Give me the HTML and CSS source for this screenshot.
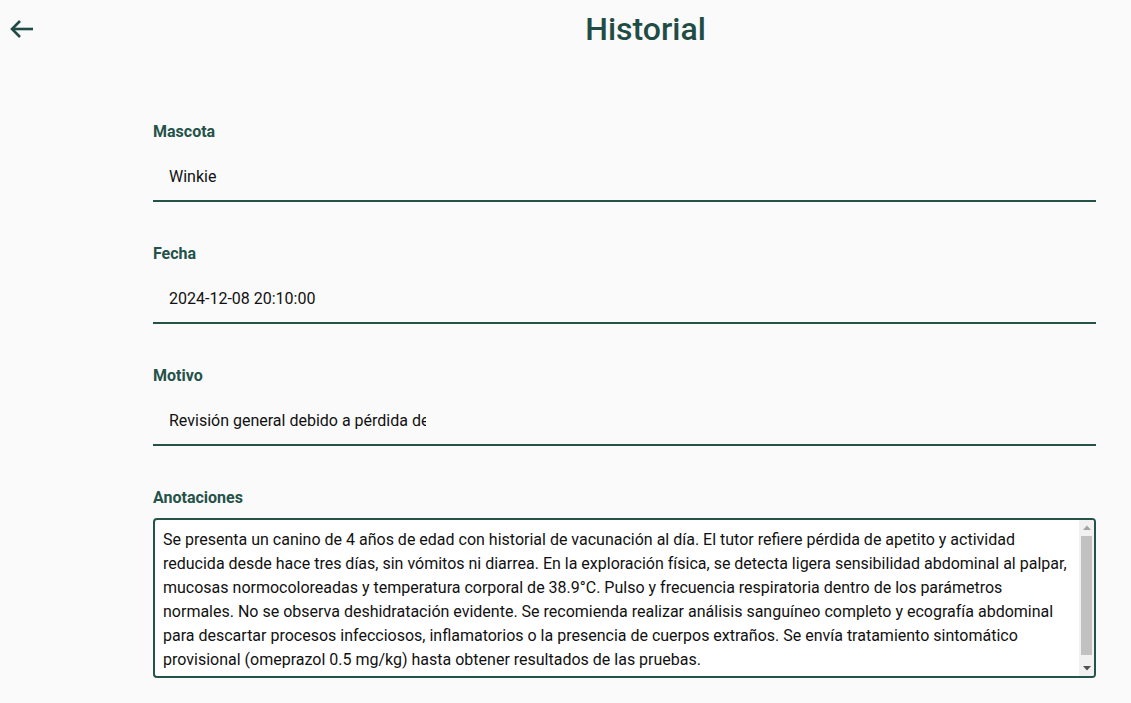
FILE: index.html
```html
<!DOCTYPE html>
<html lang="es">
<head>
<meta charset="utf-8">
<title>Historial</title>
<link rel="stylesheet" href="styles.css">
</head>
<body>
<header class="topbar">
  <div class="back-area">
    <button class="back" aria-label="Volver">
      <svg width="26" height="20" viewBox="0 0 26 20" fill="none" stroke="#1f4d45" stroke-width="2.6" stroke-linecap="butt" stroke-linejoin="miter">
        <path d="M24 10H3"/>
        <path d="M11 2L3 10l8 8"/>
      </svg>
    </button>
  </div>
  <h1 class="title">Historial</h1>
</header>
<main class="form">
  <div class="field">
    <label class="label">Mascota</label>
    <div class="line"><input class="input" type="text" value="Winkie" readonly></div>
  </div>
  <div class="field">
    <label class="label">Fecha</label>
    <div class="line"><input class="input" type="text" value="2024-12-08 20:10:00" readonly></div>
  </div>
  <div class="field">
    <label class="label">Motivo</label>
    <div class="line"><input class="input" type="text" value="Revisión general debido a pérdida de apetito y actividad reducida" readonly></div>
  </div>
  <div class="field">
    <label class="label">Anotaciones</label>
    <div class="notes-box">
      <textarea class="notes" readonly>Se presenta un canino de 4 años de edad con historial de vacunación al día. El tutor refiere pérdida de apetito y actividad reducida desde hace tres días, sin vómitos ni diarrea. En la exploración física, se detecta ligera sensibilidad abdominal al palpar, mucosas normocoloreadas y temperatura corporal de 38.9°C. Pulso y frecuencia respiratoria dentro de los parámetros normales. No se observa deshidratación evidente. Se recomienda realizar análisis sanguíneo completo y ecografía abdominal para descartar procesos infecciosos, inflamatorios o la presencia de cuerpos extraños. Se envía tratamiento sintomático provisional (omeprazol 0.5 mg/kg) hasta obtener resultados de las pruebas.</textarea>
      <div class="scrollbar" aria-hidden="true">
        <div class="sb-btn">
          <svg width="8" height="5" viewBox="0 0 8 5"><path d="M0 5L4 0.5L8 5Z" fill="#a3a3a3"/></svg>
        </div>
        <div class="sb-track"><div class="sb-thumb"></div></div>
        <div class="sb-btn">
          <svg width="8" height="5" viewBox="0 0 8 5"><path d="M0 0L4 4.5L8 0Z" fill="#505050"/></svg>
        </div>
      </div>
    </div>
  </div>
</main>
</body>
</html>
```
FILE: styles.css
```css
* { box-sizing: border-box; }
html, body {
  margin: 0;
  padding: 0;
  background: #fafafa;
  font-family: Roboto, "Liberation Sans", sans-serif;
  color: #111;
}
.topbar {
  display: flex;
  align-items: center;
  height: 58px;
}
.back-area {
  width: 160px;
  flex: none;
  display: flex;
  align-items: center;
}
.back {
  background: none;
  border: 0;
  padding: 0;
  margin-left: 8px;
  width: 28px;
  height: 28px;
  display: flex;
  align-items: center;
  justify-content: center;
  cursor: pointer;
}
.title {
  flex: 1;
  margin: 0;
  text-align: center;
  font-size: 32px;
  font-weight: 500;
  color: #1f4d45;
  line-height: 58px;
}
.form {
  padding: 64px 35px 0 153px;
}
.field {
  margin-bottom: 42px;
}
.label {
  display: block;
  font-size: 16px;
  font-weight: 700;
  color: #255249;
  line-height: 19px;
  margin-bottom: 11px;
}
.line {
  border-bottom: 2px solid #255249;
  height: 50px;
}
.input {
  display: block;
  width: 289px;
  height: 48px;
  border: 0;
  outline: none;
  background: transparent;
  padding: 0 16px;
  font-family: Roboto, "Liberation Sans", sans-serif;
  font-size: 16px;
  color: #111;
}
.notes-box {
  display: flex;
  height: 160px;
  border: 2px solid #255249;
  border-radius: 4px;
  background: #fff;
  overflow: hidden;
}
.notes {
  flex: 1;
  min-width: 0;
  height: 100%;
  border: 0;
  background: transparent;
  padding: 8px;
  font-family: Roboto, "Liberation Sans", sans-serif;
  font-size: 16px;
  line-height: 24px;
  color: #111;
  resize: none;
  outline: none;
  overflow: hidden;
}
.scrollbar {
  flex: none;
  width: 15px;
  display: flex;
  flex-direction: column;
  background: #f1f1f1;
}
.sb-btn {
  flex: none;
  height: 15px;
  display: flex;
  align-items: center;
  justify-content: center;
}
.sb-track {
  flex: 1;
  padding: 1px 2px 0;
}
.sb-thumb {
  height: 119px;
  background: #c1c1c1;
}
```
